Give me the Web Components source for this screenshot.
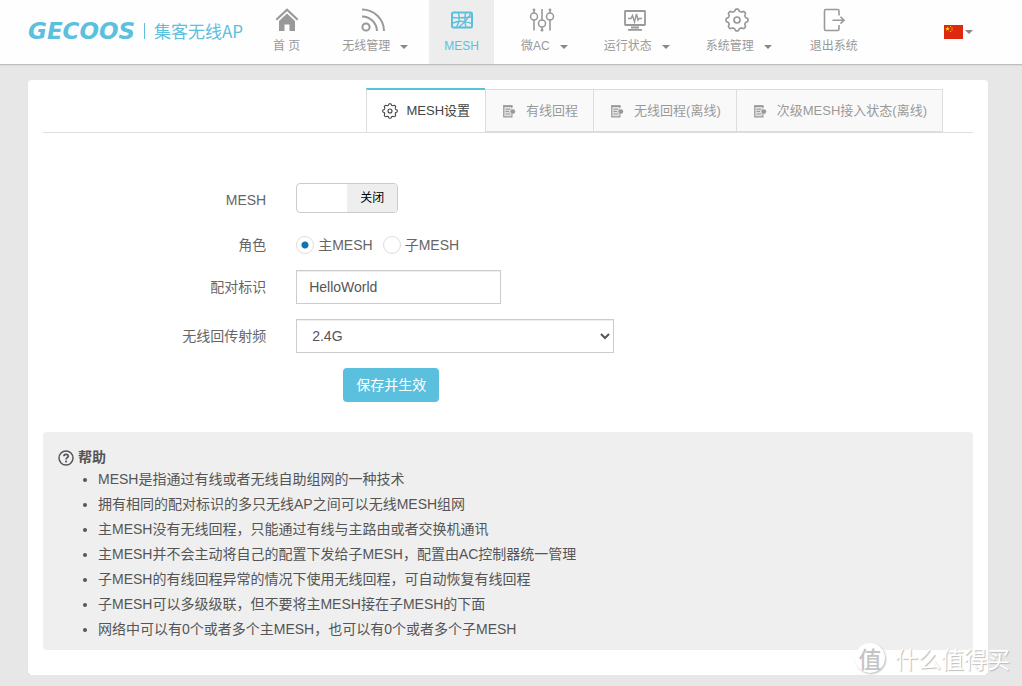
<!DOCTYPE html>
<html lang="zh-CN">
<head>
<meta charset="utf-8">
<meta name="viewport" content="width=device-width, initial-scale=1">
<title>MESH设置</title>
<style>
  html { min-height: 100%; background: #e7e7e7; }
  body {
    margin: 0; color: #555; font-size: 14px; line-height: 20px;
    font-family: "Liberation Sans", "Noto Sans CJK SC", sans-serif;
  }
</style>
</head>
<body>
<ap-header></ap-header>
<ap-card>
  <ap-tabs></ap-tabs>
  <mesh-form></mesh-form>
  <help-box>
    <li>MESH是指通过有线或者无线自助组网的一种技术</li>
    <li>拥有相同的配对标识的多只无线AP之间可以无线MESH组网</li>
    <li>主MESH没有无线回程，只能通过有线与主路由或者交换机通讯</li>
    <li>主MESH并不会主动将自己的配置下发给子MESH，配置由AC控制器统一管理</li>
    <li>子MESH的有线回程异常的情况下使用无线回程，可自动恢复有线回程</li>
    <li>子MESH可以多级级联，但不要将主MESH接在子MESH的下面</li>
    <li>网络中可以有0个或者多个主MESH，也可以有0个或者多个子MESH</li>
  </help-box>
</ap-card>
<site-mark></site-mark>

<script>
const gearPath = (() => {
  // Eight-lobed gear outline centred on 12,12
  let d = '';
  for (let i = 0; i <= 96; i++) {
    const a = i / 96 * Math.PI * 2;
    const wave = Math.tanh(Math.cos(a * 8) * 2);
    const r = 9.9 + wave * 1.1;
    d += (i ? 'L' : 'M') + (12 + r * Math.sin(a)).toFixed(2) + ' ' + (12 - r * Math.cos(a)).toFixed(2);
  }
  return d + 'Z';
})();

const icons = {
  home: `<path d="M1.300 11.800 12 1.800l10.700 10" stroke-width="2.200"/><path fill="currentColor" stroke="none" d="M12 5.500 4 13v10h5.500v-6.500h5V23H20V13z"/>`,
  rss: `<circle cx="5" cy="19" r="3.600" stroke-width="2"/><path stroke-width="2" d="M1 1.500C13 1.500 23 11 23 23M1 8.500c8 0 14.500 6 15 14.500"/>`,
  mesh: `<rect x="2" y="4.500" width="20" height="15" rx="1.500" stroke-width="2"/><path stroke-width="1.400" d="M3 9.500c6 1.200 12-.5 19-.5M3 15c7-3 12-1.500 19 .5M8.500 5c1.500 5 .5 10-2 14M15.500 5c-1 5-1 9 .5 14M21 5c-3 6-7 10-12 14"/>`,
  sliders: `<path d="M4 12v10.500M12 1v11M20 12v10.500M4 3v2M20 3v2M12 19v2" stroke-width="1.600"/><circle cx="4" cy="8.500" r="3.500"/><circle cx="12" cy="15.500" r="3.500"/><circle cx="20" cy="8.500" r="3.500"/><g fill="currentColor" stroke="none"><circle cx="4" cy="1.800" r="1.400"/><circle cx="20" cy="1.800" r="1.400"/><circle cx="12" cy="22.200" r="1.400"/></g>`,
  monitor: `<rect x="2" y="3" width="20" height="14" rx=".5" stroke-width="1.800"/><path d="M5 10.500h3l1.500-3 2 6.500 2-8 1.500 6 1-1.500h3" stroke-width="1.400"/><path d="M8 19.500h8M5 21.800h14" stroke-width="1.800"/>`,
  gear: `<path d="${gearPath}" stroke-width="1.700"/><circle cx="12" cy="12" r="3" stroke-width="1.700"/>`,
  exit: `<path d="M17 7.500V3q0-1.500-1.500-1.500H4Q2.500 1.500 2.500 3v18q0 1.500 1.500 1.500h11.500q1.500 0 1.500-1.500v-4M10.500 12.200H22M18.500 8.800l3.500 3.400-3.500 3.400" stroke-width="1.600"/>`,
  doc: `<path fill="currentColor" fill-opacity=".25" d="M17 7V4H3v18h14v-4.500" stroke-width="2"/><path d="M6 9h8M6 13h6M6 17h8" stroke-width="1.800"/><path d="M2 3.500h16" stroke-width="3"/><circle cx="18.500" cy="13" r="4.200" fill="currentColor" stroke="none"/>`,
  help: `<circle cx="12" cy="12" r="10.500" stroke-width="2.200"/><path d="M8.800 9.500c0-4 6.500-4 6.500-.3 0 2.300-3.200 2.300-3.200 5" stroke-width="2.600"/><circle cx="12.100" cy="17.300" r="1.600" fill="currentColor" stroke="none"/>`
};

function component(name, render) {
  customElements.define(name, class extends HTMLElement {
    connectedCallback() {
      if (this.shadowRoot) return;
      const t = document.createElement('template');
      t.innerHTML = render(this);
      this.attachShadow({ mode: 'open' }).append(t.content.cloneNode(true));
    }
  });
}

component('ap-icon', el => `
<style>
  :host { display: block; width: 24px; height: 24px; flex: none; }
  svg { display: block; width: 100%; height: 100%; overflow: visible; }
</style>
<svg viewBox="0 0 24 24" fill="none" stroke="currentColor" stroke-width="1.500" aria-hidden="true">${icons[el.getAttribute('name')]}</svg>`);

component('ap-caret', () => `
<style>
  :host { display: block; flex: none; border: 4px solid transparent; border-top-color: #888; border-bottom: 0; }
</style>`);

component('nav-item', el => `
<style>
  :host { display: block; }
  a {
    display: flex; flex-direction: column; align-items: center; gap: 4px;
    box-sizing: border-box; height: 64px; padding: 8px 15px 0;
    color: #999; font-size: 12px; line-height: 20px; text-decoration: none; white-space: nowrap;
  }
  :host([active]) a { background: #ededed; color: #5bc0de; }
  span { display: flex; align-items: center; gap: 10px; }
  ap-caret { margin-right: -4px; margin-top: 2px; }
</style>
<a href="#"><ap-icon name="${el.getAttribute('icon')}"></ap-icon><span><slot></slot>${el.hasAttribute('menu') ? '<ap-caret></ap-caret>' : ''}</span></a>`);

component('ap-header', () => `
<style>
  :host { display: flex; height: 64px; padding: 0 49px 0 28px; background: #fefefe; border-bottom: 1px solid #bebebe; box-shadow: 0 1px 1px #ddd; }
  .brand { display: flex; align-items: center; width: 230px; height: 62px; flex: none; color: #5bc0de; text-decoration: none; white-space: nowrap; }
  b { width: 116px; font: italic bold 23px/24px "DejaVu Sans", sans-serif; }
  .sub { border-left: 1px solid; padding-left: 9px; font: 17px/16px "Noto Sans CJK SC", sans-serif; }
  nav { display: flex; gap: 10px; flex: 1; }
  .near { margin-left: 2px; }
  button { display: flex; align-items: center; gap: 2px; border: 0; padding: 0; background: none; height: 64px; }
  .flag { width: 19px; height: 14px; display: block; }
</style>
<a class="brand" href="#"><b>GECOOS</b><span class="sub">集客无线AP</span></a>
<nav>
  <nav-item icon="home">首 页</nav-item>
  <nav-item class="near" icon="rss" menu>无线管理</nav-item>
  <nav-item icon="mesh" active>MESH</nav-item>
  <nav-item class="near" icon="sliders" menu>微AC</nav-item>
  <nav-item icon="monitor" menu>运行状态</nav-item>
  <nav-item icon="gear" menu>系统管理</nav-item>
  <nav-item class="near" icon="exit">退出系统</nav-item>
</nav>
<button type="button" aria-label="语言">
  <svg class="flag" viewBox="0 0 19 14"><path fill="#de2910" d="M0 0h19v14H0z"/><path fill="#ffde00" d="m3.500 1.500.6 1.600h1.700L4.500 4.100l.5 1.600-1.500-1L2 5.700l.5-1.600-1.300-1h1.700zM6 1h1v1H6zM7.500 2.500h1v1h-1zM7.500 4.500h1v1h-1zM6 6h1v1H6z"/></svg>
  <ap-caret></ap-caret>
</button>`);

component('ap-card', () => `
<style>
  :host { display: block; max-width: 960px; box-sizing: border-box; margin: 15px 34px 0 28px; padding: 8px 15px 25px; background: #fff; border-radius: 4px; box-shadow: 0 1px 1px #d4d4d4; }
</style>
<slot></slot>`);

component('ap-tabs', () => `
<style>
  :host { display: block; border-bottom: 1px solid #ddd; padding-right: 30px; }
  div { display: flex; justify-content: flex-end; align-items: flex-end; }
  button {
    display: flex; align-items: center; gap: 9px; box-sizing: border-box; height: 43px; padding: 0 15px;
    background: #f9f9f9; border: 1px solid #ddd; border-right-width: 0; color: #999;
    font: inherit; font-size: 13px; white-space: nowrap;
  }
  button:last-child { border-right-width: 1px; }
  button[aria-selected=true] { height: 44px; background: #fff; color: #444; border-top: 2px solid #5bc0de; border-bottom: 0; }
  ap-icon { width: 16px; height: 16px; }
  button[aria-selected=false] ap-icon { height: 14px; }
</style>
<div role="tablist">
  <button type="button" role="tab" aria-selected="true"><ap-icon name="gear"></ap-icon>MESH设置</button>
  <button type="button" role="tab" aria-selected="false"><ap-icon name="doc"></ap-icon>有线回程</button>
  <button type="button" role="tab" aria-selected="false"><ap-icon name="doc"></ap-icon>无线回程(离线)</button>
  <button type="button" role="tab" aria-selected="false"><ap-icon name="doc"></ap-icon>次级MESH接入状态(离线)</button>
</div>`);

component('field-row', () => `
<style>
  :host { display: grid; grid-template-columns: 24% 1fr; column-gap: 30px; align-items: center; }
  .label { text-align: right; }
  .control { display: flex; align-items: center; }
</style>
<div class="label"><slot name="label"></slot></div><div class="control"><slot></slot></div>`);

component('mesh-form', () => `
<style>
  :host { display: block; padding: 50px 0 30px; }
  form { display: grid; gap: 15px; color: #666; }
  .switch { position: relative; display: flex; justify-content: flex-end; box-sizing: border-box; width: 102px; height: 30px; border: 1px solid #ccc; border-radius: 4px; overflow: hidden; background: #fff; }
  .switch input { position: absolute; inset: 0; width: 100%; height: 100%; margin: 0; opacity: 0; }
  .switch span { width: 50px; background: #eee; color: #000; font-size: 12px; line-height: 28px; text-align: center; }
  .first { margin-bottom: 7px; }
  .first > [slot] { display: block; padding-top: 4px; }
  .radio { display: flex; align-items: center; gap: 4px; height: 20px; margin-right: 10px; }
  .radio input { appearance: none; width: 18px; height: 18px; margin: 0; border: 1px solid #ddd; border-radius: 50%; background: #fff; }
  .radio input:checked { background: radial-gradient(circle, #0f75b0 3px, transparent 4px); }
  .text, select { box-sizing: border-box; height: 34px; border: 1px solid #ccc; border-radius: 0; background: #fff; color: #555; font: inherit; box-shadow: inset 0 1px 1px #eee; }
  .text { width: 205px; padding: 0 12px; }
  select { width: 318px; max-width: 100%; padding: 0 11px; }
  .save { margin-left: 47px; height: 34px; padding: 0 13px; border: 0; border-radius: 4px; background: #5bc0de; color: #fff; font: inherit; }
</style>
<form>
  <field-row class="first"><label slot="label" for="mesh">MESH</label>
    <label class="switch"><input id="mesh" type="checkbox" role="switch"><span>关闭</span></label></field-row>
  <field-row role="radiogroup" aria-label="角色"><span slot="label">角色</span>
    <label class="radio"><input type="radio" name="role" checked>主MESH</label>
    <label class="radio"><input type="radio" name="role">子MESH</label></field-row>
  <field-row><label slot="label" for="pair">配对标识</label>
    <input class="text" id="pair" type="text" value="HelloWorld"></field-row>
  <field-row><label slot="label" for="band">无线回传射频</label>
    <select id="band"><option>2.4G</option></select></field-row>
  <field-row><button class="save" type="button">保存并生效</button></field-row>
</form>`);

component('help-box', () => `
<style>
  :host { display: block; padding: 16px 15px 8px; background: #efefef; border-radius: 4px; }
  h2 { display: flex; align-items: center; gap: 4px; margin: 0; font-size: 14px; line-height: 19px; }
  ap-icon { width: 16px; height: 16px; }
  ul { margin: 0; padding-left: 40px; line-height: 25px; }
</style>
<h2><ap-icon name="help"></ap-icon>帮助</h2>
<ul><slot></slot></ul>`);

component('site-mark', () => `
<style>
  :host { position: absolute; right: 12px; bottom: 12px; display: flex; align-items: center; gap: 10px; color: #fff; font: 23px/32px "Noto Sans CJK SC", sans-serif; text-shadow: 1px 1px 1px #bbb; pointer-events: none; }
  b { width: 30px; height: 30px; border-radius: 50%; background: #fff; box-shadow: 1px 1px 2px #bbb; color: #c4c4c4; font-weight: 500; line-height: 30px; text-align: center; text-shadow: none; }
</style>
<b>值</b><span>什么值得买</span>`);
</script>
</body>
</html>
